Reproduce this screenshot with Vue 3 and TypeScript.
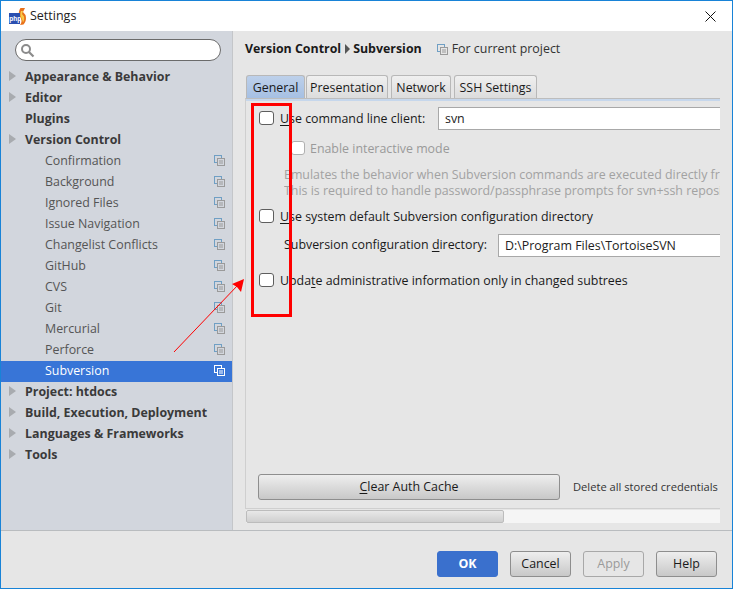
<script setup lang="ts">
interface Row { label: string; level: 'top' | 'child'; arrow?: boolean; copy?: boolean; selected?: boolean }
const children = ['Confirmation','Background','Ignored Files','Issue Navigation','Changelist Conflicts','GitHub','CVS','Git','Mercurial','Perforce']
const rows: Row[] = [
  { label: 'Appearance & Behavior', level: 'top', arrow: true },
  { label: 'Editor', level: 'top', arrow: true },
  { label: 'Plugins', level: 'top' },
  { label: 'Version Control', level: 'top', arrow: true },
  ...children.map((label): Row => ({ label, level: 'child', copy: true })),
  { label: 'Subversion', level: 'child', copy: true, selected: true },
  { label: 'Project: htdocs', level: 'top', arrow: true },
  { label: 'Build, Execution, Deployment', level: 'top', arrow: true },
  { label: 'Languages & Frameworks', level: 'top', arrow: true },
  { label: 'Tools', level: 'top', arrow: true },
]
const tabs = ['General', 'Presentation', 'Network', 'SSH Settings']
</script>

<template>
  <div class="window">
    <header class="titlebar">
      <svg class="logo" width="17" height="17" viewBox="0 0 17 17">
        <path d="M11 0h5l-2 4 2.500 3c1 3.500.5 7-2 9.500l-3.500.5c1.500-2 2-4 1-6l-2-3c-.5-2.500 0-6 1.500-8z" fill="#e8701a" />
        <path d="M12 3h2l-1 3 2 2.500c.5 2.500 0 4.500-1 6-.5-2-1-4-2.500-6.500-.2-2 0-3.500.5-5z" fill="#f7c948" />
        <rect x="0" y="5" width="11" height="11" fill="#2a4fb0" />
        <text x="0.2" y="13" font-size="6.500" font-weight="700" fill="#fff" font-family="Liberation Sans, sans-serif">php</text>
      </svg>
      <span class="title">Settings</span>
      <svg class="close" width="11" height="11" viewBox="0 0 11 11">
        <path d="M.5.5l10 10M10.500.5l-10 10" stroke="#111" stroke-width="1" fill="none" />
      </svg>
    </header>

    <div class="body">
      <aside class="sidebar">
        <div class="search">
          <svg width="15" height="15" viewBox="0 0 15 15">
            <circle cx="6" cy="6" r="4" fill="none" stroke="#8b8b8b" stroke-width="2" />
            <path d="M9 9l4.500 4.500" stroke="#8b8b8b" stroke-width="2.200" />
          </svg>
        </div>
        <ul class="tree">
          <li v-for="r in rows" :key="r.label" class="row" :class="[r.level, { selected: r.selected }]">
            <span v-if="r.arrow" class="arrow"></span>
            <span class="label">{{ r.label }}</span>
            <svg v-if="r.copy" class="copy" width="11" height="11" viewBox="0 0 11 11">
              <rect x=".5" y=".5" width="7" height="7" fill="none" :stroke="r.selected ? '#fff' : '#6f9fc4'" />
              <rect x="3.500" y="3.500" width="7" height="7" :fill="r.selected ? '#3875d7' : '#d2d6dd'" :stroke="r.selected ? '#fff' : '#9a9a9a'" />
              <path d="M5 6h4M5 8h4" :stroke="r.selected ? '#fff' : '#9a9a9a'" />
            </svg>
          </li>
        </ul>
      </aside>

      <main class="main">
        <div class="crumbs">
          <strong>Version Control</strong>
          <span class="crumb-sep"></span>
          <strong>Subversion</strong>
          <span class="scope">
            <svg width="11" height="11" viewBox="0 0 11 11">
              <rect x=".5" y=".5" width="7" height="7" fill="none" stroke="#6f9fc4" />
              <rect x="3.500" y="3.500" width="7" height="7" fill="#e6e6e6" stroke="#9a9a9a" />
              <path d="M5 6h4M5 8h4" stroke="#9a9a9a" />
            </svg>
            For current project
          </span>
        </div>

        <div class="tabs">
          <span v-for="(t, i) in tabs" :key="t" class="tab" :class="{ active: i === 0 }">{{ t }}</span>
        </div>

        <section class="panel">
          <div class="form">
            <div class="line first">
              <span class="check"></span>
              <span class="text"><u>U</u>se command line client:</span>
              <div class="input cmd">svn</div>
            </div>
            <div class="line sub">
              <span class="check dim"></span>
              <span class="text muted">Enable interactive mode</span>
            </div>
            <p class="hint">
              <span>Emulates the behavior when Subversion commands are executed directly from the terminal.</span>
              <span>This is required to handle password/passphrase prompts for svn+ssh repositories.</span>
            </p>
            <div class="line system">
              <span class="check"></span>
              <span class="text"><u>U</u>se system default Subversion configuration directory</span>
            </div>
            <div class="line dir">
              <span class="text">Subversion configuration <u>d</u>irectory:</span>
              <div class="input path">D:\Program Files\TortoiseSVN</div>
            </div>
            <div class="line update">
              <span class="check"></span>
              <span class="text">Upda<u>t</u>e administrative information only in changed subtrees</span>
            </div>
          </div>
          <div class="cache">
            <button class="btn wide"><u>C</u>lear Auth Cache</button>
            <span class="note">Delete all stored credentials</span>
          </div>
        </section>
        <div class="scrollbar"><div class="thumb"></div></div>
      </main>
    </div>

    <footer class="footer">
      <button class="btn ok">OK</button>
      <button class="btn">Cancel</button>
      <button class="btn off">Apply</button>
      <button class="btn">Help</button>
    </footer>

    <div class="mark"></div>
    <svg class="pointer" width="80" height="80" viewBox="0 0 80 80">
      <path d="M4 75L68 8" stroke="#f00" stroke-width="1" fill="none" />
      <path d="M74 2l-3 13-4-5-5-3z" fill="#f00" />
    </svg>
  </div>
</template>

<style>
html, body { margin: 0; background: #e6e6e6; }
</style>

<style scoped>
* { box-sizing: border-box; }
.window {
  position: relative; width: 733px; height: 589px; overflow: hidden;
  display: flex; flex-direction: column;
  border: 1px solid #1883d7; background: #e6e6e6;
  font: 12.400px/18px "Open Sans", "Noto Sans", sans-serif; color: #1a1a1a;
}
.titlebar { flex: none; height: 30px; background: #fff; display: flex; align-items: center; padding: 0 16px 0 8px; }
.logo { flex: none; margin-right: 4px; }
.title { font-size: 12.500px; color: #222; }
.close { margin-left: auto; }
.body { flex: none; height: 500px; display: flex; border-bottom: 1px solid #b9bcbf; }
.sidebar { flex: none; width: 231px; background: #d2d6dd; padding-top: 8px; }
.search {
  margin-left: 14px; width: 206px; height: 22px; border: 1px solid #6b6b6b; border-radius: 11px;
  background: #fff; display: flex; align-items: center; padding-left: 4px;
}
.tree { list-style: none; margin: 6px 0 0; padding: 0; }
.row { position: relative; height: 21px; display: flex; align-items: center; padding-bottom: 2px; color: #3a3a3a; }
.row.top { padding-left: 24px; font-weight: 700; }
.row.child { padding-left: 44px; color: #555; }
.row.selected { background: #3875d7; color: #fff; }
.arrow {
  position: absolute; left: 8px; top: 4px; width: 0; height: 0;
  border-left: 7px solid #a8abaf; border-top: 5px solid transparent; border-bottom: 5px solid transparent;
}
.copy { margin-left: auto; margin-right: 7px; }
.main { flex: 1; min-width: 0; border-left: 1px solid #c4c6c9; padding: 0 12px; }
.crumbs { height: 44px; display: flex; align-items: center; padding-bottom: 8px; color: #1a1a1a; }
.crumbs strong { font-weight: 700; }
.crumb-sep {
  width: 0; height: 0; margin: 0 3px 0 4px;
  border-left: 5px solid #555; border-top: 5px solid transparent; border-bottom: 5px solid transparent;
}
.scope { display: inline-flex; align-items: center; gap: 4px; margin-left: 15px; color: #333; }
.tabs { height: 23px; display: flex; margin-left: 1px; }
.tab {
  flex: none; height: 23px; padding: 0; margin-right: 1px; text-align: center; background: linear-gradient(#f0f0f0, #dcdcdc);
  border: 1px solid #b8b8b8; border-bottom: 0; border-radius: 3px 3px 0 0; line-height: 23px; white-space: nowrap;
}
.tab:nth-child(1) { width: 59px; }
.tab:nth-child(2) { width: 82px; }
.tab:nth-child(3) { width: 60px; margin-left: 2px; margin-right: 3px; }
.tab:nth-child(4) { width: 83px; }
.tab.active { background: linear-gradient(#bdd0ea, #a6c0e3); }
.panel {
  height: 411px; display: flex; flex-direction: column; justify-content: space-between;
  border-top: 1px solid #bdbdbd; border-left: 1px solid #cfcfcf; border-bottom: 1px solid #cfcfcf;
  background: linear-gradient(#c6d7ec, #c6d7ec) top / 100% 2px no-repeat;
}
.form { overflow: hidden; }
.line { display: flex; align-items: center; white-space: nowrap; }
.check { flex: none; width: 15px; height: 14px; margin: 0 6px 2px 0; background: #fff; border: 1px solid #5e5e5e; border-radius: 3px; }
.check.dim { width: 14px; border-color: #b0b0b0; margin-right: 5px; }
.first { height: 23px; margin-top: 8px; padding-left: 13px; }
.first .text { width: 158px; flex: none; }
.input { background: #fff; height: 23px; line-height: 21px; padding-left: 6px; border: 1px solid #a8a8a8; border-right: 0; flex: 1; color: #222; }
.sub { height: 18px; margin-top: 10px; padding-left: 45px; }
.muted { color: #9a9a9a; }
.hint { margin: 9px 0 0; padding-left: 38px; color: #a2a2a2; line-height: 16px; }
.hint span { display: block; white-space: nowrap; overflow: hidden; }
.system { height: 18px; margin-top: 9px; padding-left: 13px; }
.dir { height: 24px; margin-top: 7px; padding-left: 38px; }
.dir .text { width: 214px; flex: none; }
.update { height: 18px; margin-top: 15px; padding-left: 13px; }
.cache { display: flex; align-items: center; padding: 0 3px 8px 12px; }
.btn {
  font: inherit; height: 26px; padding: 0; width: 61px; color: #1a1a1a; flex: none;
  background: linear-gradient(#eeeeee, #c8c8c8); border: 1px solid #8e8e8e; border-radius: 3px;
}
.btn.wide { width: 302px; }
.note { margin-left: 13px; font-size: 11.150px; color: #333; white-space: nowrap; }
.scrollbar { height: 13px; margin-top: 1px; margin-left: 1px; background: #f5f5f5; }
.thumb { width: 258px; height: 100%; background: linear-gradient(#e8e8e8, #cfcfcf); border: 1px solid #bcbcbc; border-radius: 2px; }
.footer { flex: 1; display: flex; justify-content: flex-end; gap: 12px; padding: 20px 15px 0 0; }
.btn.ok { background: #3a70cd; border-color: #3a70cd; color: #fff; font-weight: 700; }
.btn.off { color: #9a9a9a; background: #e6e6e6; border-color: #a8a8a8; }
.mark { position: absolute; left: 250px; top: 102px; width: 41px; height: 214px; border: 3px solid #f00; }
.pointer { position: absolute; left: 169px; top: 276px; }
u { text-underline-offset: 2px; }
</style>
